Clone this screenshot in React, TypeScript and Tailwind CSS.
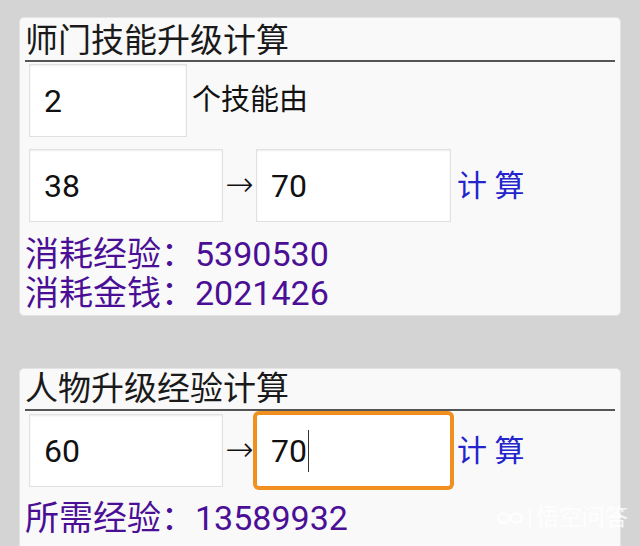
import React from 'react';

const font = { fontFamily: 'Roboto, "Noto Sans CJK SC", sans-serif' };

function Box({ value, w, focused }: { value: string; w: string; focused?: boolean }) {
  return (
    <div className={`${w} h-[73px] bg-white border flex items-center pl-[14px] text-[32px] text-[#111] ${focused ? 'border-[#f08c1e] rounded-[3px] shadow-[0_0_0_3px_#f0901f]' : 'border-[#e1e1e1] shadow-[inset_0_1px_2px_rgba(0,0,0,0.08)]'}`}>
      <span>{value}</span>
      {focused && <span className="ml-[1px] w-[1px] h-[42px] bg-[#333]" />}
    </div>
  );
}

function Calc() {
  return <span className="ml-[6px] text-[30px] text-[#2424cc] whitespace-pre">计 算</span>;
}

function Arrow() {
  return <span className="w-[33px] text-center text-[34px] leading-none text-[#111] font-extralight -translate-y-[2px]" style={{ fontFamily: '"DejaVu Sans", sans-serif' }}>→</span>;
}

export default function App() {
  return (
    <div className="relative w-[640px] h-[546px] overflow-hidden bg-[#d4d4d4] pt-[17px] px-[19px]" style={font}>
      {/* 师门技能 */}
      <div className="h-[299px] bg-[#f9f9f9] border border-[#e4e4e4] rounded-[5px] pl-[5px] pr-[5px]">
        <div className="h-[44px] leading-[46px] text-[33px] text-[#1a1a1a] border-b-2 border-[#555]">师门技能升级计算</div>
        <div className="mt-[2px] pl-[4px] flex items-center">
          <Box value="2" w="w-[158px]" />
          <span className="ml-[5px] text-[29px] text-[#111]">个技能由</span>
        </div>
        <div className="mt-[12px] pl-[4px] flex items-center">
          <Box value="38" w="w-[194px]" />
          <Arrow />
          <Box value="70" w="w-[195px]" />
          <Calc />
        </div>
        <div className="mt-[13px] text-[34px] leading-[39px] text-[#4b0f96]">
          <div>消耗经验：5390530</div>
          <div>消耗金钱：2021426</div>
        </div>
      </div>

      {/* 人物升级 */}
      <div className="mt-[52px] h-[190px] bg-[#f9f9f9] border border-[#e4e4e4] rounded-[5px] pl-[5px] pr-[5px]">
        <div className="h-[42px] leading-[40px] text-[33px] text-[#1a1a1a] border-b-2 border-[#555]">人物升级经验计算</div>
        <div className="mt-[3px] pl-[4px] flex items-center">
          <Box value="60" w="w-[194px]" />
          <Arrow />
          <Box value="70" w="w-[195px]" focused />
          <Calc />
        </div>
        <div className="mt-[12px] text-[34px] leading-[39px] text-[#4b0f96]">所需经验：13589932</div>
      </div>

      {/* watermark */}
      <div className="absolute right-[12px] bottom-[11px] flex items-center gap-[5px] text-white/80 text-[23px]">
        <svg width="28" height="14" viewBox="0 0 28 14" fill="none" stroke="currentColor" strokeWidth="2.5">
          <ellipse cx="7.5" cy="7" rx="5.5" ry="4.5" />
          <ellipse cx="20.5" cy="7" rx="5.5" ry="4.5" />
        </svg>
        <span className="w-[2px] h-[20px] bg-white/70" />
        <span>悟空问答</span>
      </div>
    </div>
  );
}
